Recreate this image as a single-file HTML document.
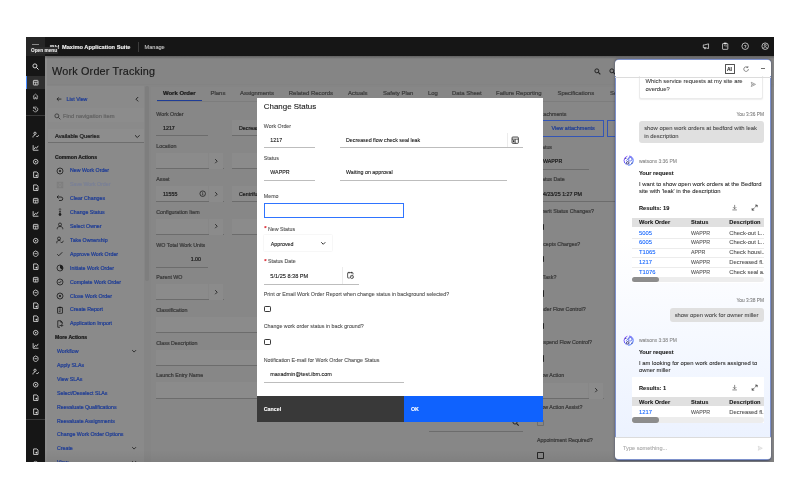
<!DOCTYPE html>
<html lang="en">
<head>
<meta charset="utf-8">
<title>Work Order Tracking - Change Status</title>
<style>
html,body{margin:0;padding:0;background:#ffffff;}
body{width:800px;height:500px;position:relative;overflow:hidden;font-family:"Liberation Sans",sans-serif;}
#app{position:absolute;left:0;top:0;width:800px;height:500px;overflow:hidden;}
#clip{position:absolute;left:0;top:0;width:774px;height:462px;overflow:hidden;will-change:transform;}
.b{position:absolute;}
.t{position:absolute;white-space:nowrap;}
</style>
</head>
<body>
<div id="app"><div id="clip">
<!-- application under overlay -->
<div class="b" style="left:26px;top:37px;width:748px;height:425px;background:#858585;"></div>
<div class="b" style="left:26px;top:37px;width:748px;height:19px;background:#161616;"></div>
<div class="b" style="left:26px;top:56px;width:19px;height:406px;background:#161616;"></div>
<div class="b" style="left:26px;top:37px;width:19px;height:19px;background:#262626;"></div>
<div class="b" style="left:31.8px;top:44.4px;width:7px;height:1.1px;background:#8a8a8a;"></div>
<div class="t" style="top:43.61px;font-size:5.65px;line-height:6.78px;color:#f4f4f4;left:49.5px;-webkit-text-stroke:0.1px currentColor;">IBM</div>
<div class="t" style="top:43.61px;font-size:5.65px;line-height:6.78px;color:#f4f4f4;left:62px;font-weight:700;-webkit-text-stroke:0.1px currentColor;">Maximo Application Suite</div>
<div class="b" style="left:137.6px;top:41.5px;width:0.6px;height:10px;background:#3c3c3c;"></div>
<div class="t" style="top:43.64px;font-size:5.6px;line-height:6.72px;color:#c6c6c6;left:144.5px;-webkit-text-stroke:0.1px currentColor;">Manage</div>
<div class="b" style="left:29.5px;top:47px;width:28.5px;height:6.6px;background:#2c2c2c;border-radius:0.8px;"></div>
<div class="t" style="top:47.95px;font-size:4.75px;line-height:5.7px;color:#e6e6e6;left:31px;font-weight:700;-webkit-text-stroke:0.1px currentColor;">Open menu</div>
<svg class="b" style="left:701.6px;top:42.3px;" width="8.4" height="8.4" viewBox="0 0 32 32"><path d="M5 11h5l15-4v18l-15-4H5z M9 21v5h4v-4" fill="none" stroke="#ececec" stroke-width="2.8" stroke-linejoin="round"/></svg>
<svg class="b" style="left:721px;top:42.4px;" width="8.4" height="8.4" viewBox="0 0 32 32"><rect x="6" y="6" width="20" height="22" rx="1.5" fill="none" stroke="#ececec" stroke-width="2.8"/><rect x="11" y="2.5" width="10" height="6" fill="#ececec"/><path d="M17 13h5M17 18h5M11 13l2 2 3-4" stroke="#ececec" stroke-width="2" fill="none"/></svg>
<svg class="b" style="left:740.8px;top:42.4px;" width="8.4" height="8.4" viewBox="0 0 32 32"><circle cx="16" cy="16" r="12.5" fill="none" stroke="#ececec" stroke-width="2.8"/><text x="16" y="21.5" font-size="16" font-weight="700" text-anchor="middle" fill="#ececec" font-family="Liberation Sans, sans-serif">?</text></svg>
<svg class="b" style="left:760.6px;top:42.4px;" width="8.4" height="8.4" viewBox="0 0 32 32"><circle cx="16" cy="16" r="12.5" fill="none" stroke="#ececec" stroke-width="2.8"/><circle cx="16" cy="12.5" r="4" fill="none" stroke="#ececec" stroke-width="2.4"/><path d="M8.5 25c1-4.5 4-6 7.5-6s6.5 1.5 7.5 6" fill="none" stroke="#ececec" stroke-width="2.4"/></svg>
<div class="b" style="left:26px;top:75.6px;width:19px;height:13.6px;background:#2e2e2e;"></div>
<div class="b" style="left:26px;top:75.6px;width:1.4px;height:13.6px;background:#4589ff;"></div>
<svg class="b" style="left:32px;top:63.3px;" width="7.2" height="7.2" viewBox="0 0 32 32"><circle cx="13" cy="13" r="9" fill="none" stroke="#f0f0f0" stroke-width="3.8"/><path d="M20 20l9 9" stroke="#f0f0f0" stroke-width="4.2"/></svg>
<svg class="b" style="left:31.8px;top:79.3px;" width="7.4" height="7.4" viewBox="0 0 32 32"><rect x="6" y="6" width="20" height="20" rx="2" fill="none" stroke="#dcdcdc" stroke-width="3.7"/><path d="M6 14h20M16 14v12" stroke="#dcdcdc" stroke-width="3.2"/></svg>
<svg class="b" style="left:32px;top:92.7px;" width="7" height="7" viewBox="0 0 32 32"><path d="M4 16L16 5l12 11M8 14v13h6v-7h4v7h6V14" fill="none" stroke="#dcdcdc" stroke-width="3"/></svg>
<svg class="b" style="left:32px;top:105.7px;" width="7" height="7" viewBox="0 0 32 32"><path d="M7 9a11 11 0 1 1-2 9M7 3v7h7M16 10v7l5 3" fill="none" stroke="#dcdcdc" stroke-width="3"/></svg>
<div class="b" style="left:26px;top:115.4px;width:19px;height:0.6px;background:#3a3a3a;"></div>
<svg class="b" style="left:31.8px;top:131.3px;" width="7.4" height="7.4" viewBox="0 0 32 32"><circle cx="13" cy="10" r="5" fill="none" stroke="#dcdcdc" stroke-width="3.7"/><path d="M4 28c0-7 4-10 9-10M19 22l4 4 6-8" fill="none" stroke="#dcdcdc" stroke-width="3.7"/></svg>
<svg class="b" style="left:31.8px;top:144.455px;" width="7.4" height="7.4" viewBox="0 0 32 32"><path d="M5 27h23M5 27V5M9 22l6-8 5 4 7-10" fill="none" stroke="#dcdcdc" stroke-width="3.7"/></svg>
<svg class="b" style="left:31.8px;top:157.61px;" width="7.4" height="7.4" viewBox="0 0 32 32"><circle cx="16" cy="16" r="10" fill="none" stroke="#dcdcdc" stroke-width="3.7"/><circle cx="16" cy="16" r="3.5" fill="#dcdcdc"/></svg>
<svg class="b" style="left:31.8px;top:170.76500000000001px;" width="7.4" height="7.4" viewBox="0 0 32 32"><path d="M7 4h14l5 5v19H7z" fill="none" stroke="#dcdcdc" stroke-width="3.7"/><circle cx="19" cy="20" r="4" fill="#dcdcdc"/></svg>
<svg class="b" style="left:31.8px;top:183.92000000000002px;" width="7.4" height="7.4" viewBox="0 0 32 32"><path d="M7 4h14l5 5v19H7z" fill="none" stroke="#dcdcdc" stroke-width="3.7"/><circle cx="19" cy="20" r="4" fill="#dcdcdc"/></svg>
<svg class="b" style="left:31.8px;top:197.075px;" width="7.4" height="7.4" viewBox="0 0 32 32"><rect x="6" y="6" width="20" height="20" rx="2" fill="none" stroke="#dcdcdc" stroke-width="3.7"/><path d="M6 14h20M16 14v12" stroke="#dcdcdc" stroke-width="3.2"/></svg>
<svg class="b" style="left:31.8px;top:210.23000000000002px;" width="7.4" height="7.4" viewBox="0 0 32 32"><path d="M5 27h23M5 27V5M9 22l6-8 5 4 7-10" fill="none" stroke="#dcdcdc" stroke-width="3.7"/></svg>
<svg class="b" style="left:31.8px;top:223.385px;" width="7.4" height="7.4" viewBox="0 0 32 32"><rect x="6" y="6" width="20" height="20" rx="2" fill="none" stroke="#dcdcdc" stroke-width="3.7"/><path d="M6 14h20M16 14v12" stroke="#dcdcdc" stroke-width="3.2"/></svg>
<svg class="b" style="left:31.8px;top:236.54000000000002px;" width="7.4" height="7.4" viewBox="0 0 32 32"><circle cx="16" cy="16" r="10" fill="none" stroke="#dcdcdc" stroke-width="3.7"/><circle cx="16" cy="16" r="3.5" fill="#dcdcdc"/></svg>
<svg class="b" style="left:31.8px;top:249.695px;" width="7.4" height="7.4" viewBox="0 0 32 32"><path d="M16 4l10 6v10c0 4-5 7-10 9-5-2-10-5-10-9V10z" fill="none" stroke="#dcdcdc" stroke-width="3.7"/><path d="M11 16h10" stroke="#dcdcdc" stroke-width="3.7"/></svg>
<svg class="b" style="left:31.8px;top:262.84999999999997px;" width="7.4" height="7.4" viewBox="0 0 32 32"><path d="M7 4h14l5 5v19H7z" fill="none" stroke="#dcdcdc" stroke-width="3.7"/><circle cx="19" cy="20" r="4" fill="#dcdcdc"/></svg>
<svg class="b" style="left:31.8px;top:276.005px;" width="7.4" height="7.4" viewBox="0 0 32 32"><rect x="6" y="6" width="20" height="20" rx="2" fill="none" stroke="#dcdcdc" stroke-width="3.7"/><path d="M6 14h20M16 14v12" stroke="#dcdcdc" stroke-width="3.2"/></svg>
<svg class="b" style="left:31.8px;top:289.16px;" width="7.4" height="7.4" viewBox="0 0 32 32"><path d="M16 4l10 6v10c0 4-5 7-10 9-5-2-10-5-10-9V10z" fill="none" stroke="#dcdcdc" stroke-width="3.7"/><path d="M11 16h10" stroke="#dcdcdc" stroke-width="3.7"/></svg>
<svg class="b" style="left:31.8px;top:302.315px;" width="7.4" height="7.4" viewBox="0 0 32 32"><path d="M7 4h14l5 5v19H7z" fill="none" stroke="#dcdcdc" stroke-width="3.7"/><circle cx="19" cy="20" r="4" fill="#dcdcdc"/></svg>
<svg class="b" style="left:31.8px;top:315.46999999999997px;" width="7.4" height="7.4" viewBox="0 0 32 32"><path d="M7 4h14l5 5v19H7z" fill="none" stroke="#dcdcdc" stroke-width="3.7"/><circle cx="19" cy="20" r="4" fill="#dcdcdc"/></svg>
<svg class="b" style="left:31.8px;top:328.625px;" width="7.4" height="7.4" viewBox="0 0 32 32"><circle cx="16" cy="16" r="10" fill="none" stroke="#dcdcdc" stroke-width="3.7"/><circle cx="16" cy="16" r="3.5" fill="#dcdcdc"/></svg>
<svg class="b" style="left:31.8px;top:341.78000000000003px;" width="7.4" height="7.4" viewBox="0 0 32 32"><path d="M5 27h23M5 27V5M9 22l6-8 5 4 7-10" fill="none" stroke="#dcdcdc" stroke-width="3.7"/></svg>
<svg class="b" style="left:31.8px;top:354.935px;" width="7.4" height="7.4" viewBox="0 0 32 32"><path d="M16 4l10 6v10c0 4-5 7-10 9-5-2-10-5-10-9V10z" fill="none" stroke="#dcdcdc" stroke-width="3.7"/><path d="M11 16h10" stroke="#dcdcdc" stroke-width="3.7"/></svg>
<svg class="b" style="left:31.8px;top:368.09px;" width="7.4" height="7.4" viewBox="0 0 32 32"><circle cx="13" cy="10" r="5" fill="none" stroke="#dcdcdc" stroke-width="3.7"/><path d="M4 28c0-7 4-10 9-10M19 22l4 4 6-8" fill="none" stroke="#dcdcdc" stroke-width="3.7"/></svg>
<svg class="b" style="left:31.8px;top:381.245px;" width="7.4" height="7.4" viewBox="0 0 32 32"><circle cx="16" cy="16" r="10" fill="none" stroke="#dcdcdc" stroke-width="3.7"/><circle cx="16" cy="16" r="3.5" fill="#dcdcdc"/></svg>
<svg class="b" style="left:31.8px;top:394.4px;" width="7.4" height="7.4" viewBox="0 0 32 32"><path d="M7 4h14l5 5v19H7z" fill="none" stroke="#dcdcdc" stroke-width="3.7"/><circle cx="19" cy="20" r="4" fill="#dcdcdc"/></svg>
<svg class="b" style="left:31.8px;top:407.555px;" width="7.4" height="7.4" viewBox="0 0 32 32"><path d="M7 4h14l5 5v19H7z" fill="none" stroke="#dcdcdc" stroke-width="3.7"/><circle cx="19" cy="20" r="4" fill="#dcdcdc"/></svg>
<div class="b" style="left:26px;top:418.5px;width:19px;height:0.6px;background:#3a3a3a;"></div>
<svg class="b" style="left:31.8px;top:447.6px;" width="7.4" height="7.4" viewBox="0 0 32 32"><path d="M7 4h14l5 5v19H7z" fill="none" stroke="#dcdcdc" stroke-width="3.7"/><circle cx="19" cy="20" r="4" fill="#dcdcdc"/></svg>
<svg class="b" style="left:32px;top:459.5px;" width="7" height="7" viewBox="0 0 32 32"><circle cx="16" cy="16" r="10" fill="none" stroke="#dcdcdc" stroke-width="3"/></svg>
<div class="b" style="left:45px;top:56px;width:1.6px;height:406px;background:#8e8e8e;"></div>
<div class="t" style="top:64.62px;font-size:10.8px;line-height:12.96px;color:#1a1a1a;left:52px;letter-spacing:0.2px;-webkit-text-stroke:0.16px currentColor;">Work Order Tracking</div>
<div class="b" style="left:47px;top:84.3px;width:727px;height:0.6px;background:#838383;"></div>
<div class="b" style="left:45px;top:56px;width:729px;height:2.5px;background:linear-gradient(180deg,rgba(0,0,0,0.28),rgba(0,0,0,0));"></div>
<div class="b" style="left:46.6px;top:86px;width:97.2px;height:376px;background:#8a8a8a;"></div>
<div class="b" style="left:150.5px;top:87px;width:624px;height:375px;background:#878787;"></div>
<div class="b" style="left:144.5px;top:86px;width:4.6px;height:195px;background:#7e7e7e;border-radius:2.3px;"></div>
<svg class="b" style="left:55.6px;top:96.1px;" width="6.2" height="6.2" viewBox="0 0 32 32"><path d="M28 16H6M14 7l-9 9 9 9" fill="none" stroke="#1c1c1c" stroke-width="4"/></svg>
<div class="t" style="top:96.05px;font-size:5.25px;line-height:6.3px;color:#1f3d96;left:66.5px;-webkit-text-stroke:0.22px currentColor;">List View</div>
<svg class="b" style="left:133.8px;top:95.8px;" width="6.4" height="6.4" viewBox="0 0 32 32"><path d="M21 5L10 16l11 11" fill="none" stroke="#1c1c1c" stroke-width="4.4"/></svg>
<div class="b" style="left:48px;top:108.3px;width:95.5px;height:14px;background:#8c8c8c;"></div>
<svg class="b" style="left:53.6px;top:112.6px;" width="7" height="7" viewBox="0 0 32 32"><circle cx="13" cy="13" r="9" fill="none" stroke="#3a3a3a" stroke-width="4"/><path d="M20 20l9 9" stroke="#3a3a3a" stroke-width="4.4"/></svg>
<div class="t" style="top:112.75px;font-size:5.75px;line-height:6.9px;color:#646464;left:63px;-webkit-text-stroke:0.22px currentColor;">Find navigation item</div>
<div class="b" style="left:48px;top:129px;width:95.5px;height:13px;background:#8d8d8d;"></div>
<div class="b" style="left:48px;top:141.6px;width:95.5px;height:0.7px;background:#6e6e6e;"></div>
<div class="t" style="top:133.29px;font-size:5.69px;line-height:6.83px;color:#1c1c1c;left:55px;-webkit-text-stroke:0.22px currentColor;">Available Queries</div>
<svg class="b" style="left:134px;top:133.3px;" width="6.6" height="6.6" viewBox="0 0 32 32"><path d="M5 11l11 11 11-11" fill="none" stroke="#1c1c1c" stroke-width="4.4"/></svg>
<div class="t" style="top:153.84px;font-size:5.1px;line-height:6.12px;color:#1a1a1a;left:55px;font-weight:700;-webkit-text-stroke:0.22px currentColor;">Common Actions</div>
<svg class="b" style="left:55.5px;top:166.6px;" width="8" height="8" viewBox="0 0 32 32"><circle cx="16" cy="16" r="12" fill="none" stroke="#1c1c1c" stroke-width="3.2"/><circle cx="16" cy="16" r="4" fill="#1c1c1c"/></svg>
<div class="t" style="top:167.45px;font-size:5.25px;line-height:6.3px;color:#1f3d96;left:70px;-webkit-text-stroke:0.22px currentColor;">New Work Order</div>
<svg class="b" style="left:55.5px;top:180.5px;" width="8" height="8" viewBox="0 0 32 32"><rect x="5" y="5" width="22" height="22" fill="none" stroke="#7c7c7c" stroke-width="3.2"/><path d="M10 5v8h12V5M10 27v-8h12v8" fill="none" stroke="#7c7c7c" stroke-width="2.8"/></svg>
<div class="t" style="top:181.35px;font-size:5.25px;line-height:6.3px;color:#7a8096;left:70px;-webkit-text-stroke:0.22px currentColor;">Save Work Order</div>
<svg class="b" style="left:55.5px;top:194.4px;" width="8" height="8" viewBox="0 0 32 32"><path d="M10 6l-6 6 6 6M4 12h16a7 7 0 0 1 0 14h-8" fill="none" stroke="#1c1c1c" stroke-width="3.4"/></svg>
<div class="t" style="top:195.25px;font-size:5.25px;line-height:6.3px;color:#1f3d96;left:70px;-webkit-text-stroke:0.22px currentColor;">Clear Changes</div>
<svg class="b" style="left:55.5px;top:208.3px;" width="8" height="8" viewBox="0 0 32 32"><circle cx="16" cy="5.5" r="3.6" fill="#6a6a6a" stroke="#3a3a3a" stroke-width="1.6"/><circle cx="16" cy="15" r="4.2" fill="#3a3a3a"/><circle cx="16" cy="25" r="5" fill="#1c1c1c"/><path d="M11 28l5 4 5-4z" fill="#1c1c1c"/></svg>
<div class="t" style="top:209.15px;font-size:5.25px;line-height:6.3px;color:#1f3d96;left:70px;-webkit-text-stroke:0.22px currentColor;">Change Status</div>
<svg class="b" style="left:55.5px;top:222.2px;" width="8" height="8" viewBox="0 0 32 32"><circle cx="16" cy="10" r="6" fill="none" stroke="#1c1c1c" stroke-width="3.2"/><path d="M5 29v-3c0-5 4-8 11-8s11 3 11 8v3" fill="none" stroke="#1c1c1c" stroke-width="3.2"/></svg>
<div class="t" style="top:223.05px;font-size:5.25px;line-height:6.3px;color:#1f3d96;left:70px;-webkit-text-stroke:0.22px currentColor;">Select Owner</div>
<svg class="b" style="left:55.5px;top:236.1px;" width="8" height="8" viewBox="0 0 32 32"><circle cx="12" cy="10" r="6" fill="none" stroke="#1c1c1c" stroke-width="3.2"/><path d="M3 29v-3c0-5 3-8 9-8 3 0 5 .6 6.5 2M19 24l4 4 7-9" fill="none" stroke="#1c1c1c" stroke-width="3.2"/></svg>
<div class="t" style="top:236.95px;font-size:5.25px;line-height:6.3px;color:#1f3d96;left:70px;-webkit-text-stroke:0.22px currentColor;">Take Ownership</div>
<svg class="b" style="left:55.5px;top:250px;" width="8" height="8" viewBox="0 0 32 32"><path d="M5 17l6 6L25 9" fill="none" stroke="#1c1c1c" stroke-width="3.6"/></svg>
<div class="t" style="top:250.85px;font-size:5.25px;line-height:6.3px;color:#1f3d96;left:70px;-webkit-text-stroke:0.22px currentColor;">Approve Work Order</div>
<svg class="b" style="left:55.5px;top:263.9px;" width="8" height="8" viewBox="0 0 32 32"><circle cx="16" cy="16" r="12" fill="none" stroke="#1c1c1c" stroke-width="3.2"/><path d="M16 4a12 12 0 0 1 9 20L16 16z" fill="#1c1c1c"/></svg>
<div class="t" style="top:264.75px;font-size:5.25px;line-height:6.3px;color:#1f3d96;left:70px;-webkit-text-stroke:0.22px currentColor;">Initiate Work Order</div>
<svg class="b" style="left:55.5px;top:277.8px;" width="8" height="8" viewBox="0 0 32 32"><circle cx="16" cy="16" r="12" fill="none" stroke="#1c1c1c" stroke-width="3.2"/><path d="M10 16l4 4 8-9" fill="none" stroke="#1c1c1c" stroke-width="3.2"/></svg>
<div class="t" style="top:278.65px;font-size:5.25px;line-height:6.3px;color:#1f3d96;left:70px;-webkit-text-stroke:0.22px currentColor;">Complete Work Order</div>
<svg class="b" style="left:55.5px;top:291.7px;" width="8" height="8" viewBox="0 0 32 32"><circle cx="16" cy="16" r="12" fill="none" stroke="#1c1c1c" stroke-width="3.2"/><path d="M11 11l10 10M21 11L11 21" fill="none" stroke="#1c1c1c" stroke-width="3.2"/></svg>
<div class="t" style="top:292.55px;font-size:5.25px;line-height:6.3px;color:#1f3d96;left:70px;-webkit-text-stroke:0.22px currentColor;">Close Work Order</div>
<svg class="b" style="left:55.5px;top:305.6px;" width="8" height="8" viewBox="0 0 32 32"><rect x="6" y="6" width="20" height="23" rx="1.5" fill="none" stroke="#1c1c1c" stroke-width="3.2"/><rect x="11" y="3" width="10" height="6" fill="#1c1c1c"/><path d="M11 16h10M11 22h7" stroke="#1c1c1c" stroke-width="2.8"/></svg>
<div class="t" style="top:306.45px;font-size:5.25px;line-height:6.3px;color:#1f3d96;left:70px;-webkit-text-stroke:0.22px currentColor;">Create Report</div>
<svg class="b" style="left:55.5px;top:319.5px;" width="8" height="8" viewBox="0 0 32 32"><path d="M7 3h12l6 6v8M7 3v26h9M19 3v6h6" fill="none" stroke="#1c1c1c" stroke-width="3.2"/><path d="M14 22h12M22 17l5 5-5 5" fill="none" stroke="#1c1c1c" stroke-width="3.2"/></svg>
<div class="t" style="top:320.35px;font-size:5.25px;line-height:6.3px;color:#1f3d96;left:70px;-webkit-text-stroke:0.22px currentColor;">Application Import</div>
<div class="t" style="top:334.34px;font-size:5.1px;line-height:6.12px;color:#1a1a1a;left:55px;font-weight:700;-webkit-text-stroke:0.22px currentColor;">More Actions</div>
<div class="t" style="top:348.05px;font-size:5.25px;line-height:6.3px;color:#1f3d96;left:57px;-webkit-text-stroke:0.22px currentColor;">Workflow</div>
<svg class="b" style="left:130.5px;top:348px;" width="6.2" height="6.2" viewBox="0 0 32 32"><path d="M6 11l10 10 10-10" fill="none" stroke="#1c1c1c" stroke-width="4.2"/></svg>
<div class="t" style="top:361.95px;font-size:5.25px;line-height:6.3px;color:#1f3d96;left:57px;-webkit-text-stroke:0.22px currentColor;">Apply SLAs</div>
<div class="t" style="top:375.85px;font-size:5.25px;line-height:6.3px;color:#1f3d96;left:57px;-webkit-text-stroke:0.22px currentColor;">View SLAs</div>
<div class="t" style="top:389.75px;font-size:5.25px;line-height:6.3px;color:#1f3d96;left:57px;-webkit-text-stroke:0.22px currentColor;">Select/Deselect SLAs</div>
<div class="t" style="top:403.65px;font-size:5.25px;line-height:6.3px;color:#1f3d96;left:57px;-webkit-text-stroke:0.22px currentColor;">Reevaluate Qualifications</div>
<div class="t" style="top:417.55px;font-size:5.25px;line-height:6.3px;color:#1f3d96;left:57px;-webkit-text-stroke:0.22px currentColor;">Reevaluate Assignments</div>
<div class="t" style="top:431.45px;font-size:5.25px;line-height:6.3px;color:#1f3d96;left:57px;-webkit-text-stroke:0.22px currentColor;">Change Work Order Options</div>
<div class="t" style="top:445.35px;font-size:5.25px;line-height:6.3px;color:#1f3d96;left:57px;-webkit-text-stroke:0.22px currentColor;">Create</div>
<svg class="b" style="left:130.5px;top:445.3px;" width="6.2" height="6.2" viewBox="0 0 32 32"><path d="M6 11l10 10 10-10" fill="none" stroke="#1c1c1c" stroke-width="4.2"/></svg>
<div class="t" style="top:459.25px;font-size:5.25px;line-height:6.3px;color:#1f3d96;left:57px;-webkit-text-stroke:0.22px currentColor;">View</div>
<svg class="b" style="left:130.5px;top:459.2px;" width="6.2" height="6.2" viewBox="0 0 32 32"><path d="M6 11l10 10 10-10" fill="none" stroke="#1c1c1c" stroke-width="4.2"/></svg>
<div class="t" style="top:90.33px;font-size:5.95px;line-height:7.14px;color:#1a1a1a;left:163px;font-weight:700;-webkit-text-stroke:0.22px currentColor;">Work Order</div>
<div class="t" style="top:90.33px;font-size:5.95px;line-height:7.14px;color:#3c3c3c;left:210.5px;-webkit-text-stroke:0.22px currentColor;">Plans</div>
<div class="t" style="top:90.33px;font-size:5.95px;line-height:7.14px;color:#3c3c3c;left:240px;-webkit-text-stroke:0.22px currentColor;">Assignments</div>
<div class="t" style="top:90.33px;font-size:5.95px;line-height:7.14px;color:#3c3c3c;left:288.8px;-webkit-text-stroke:0.22px currentColor;">Related Records</div>
<div class="t" style="top:90.33px;font-size:5.95px;line-height:7.14px;color:#3c3c3c;left:348px;-webkit-text-stroke:0.22px currentColor;">Actuals</div>
<div class="t" style="top:90.33px;font-size:5.95px;line-height:7.14px;color:#3c3c3c;left:383px;-webkit-text-stroke:0.22px currentColor;">Safety Plan</div>
<div class="t" style="top:90.33px;font-size:5.95px;line-height:7.14px;color:#3c3c3c;left:428px;-webkit-text-stroke:0.22px currentColor;">Log</div>
<div class="t" style="top:90.33px;font-size:5.95px;line-height:7.14px;color:#3c3c3c;left:452px;-webkit-text-stroke:0.22px currentColor;">Data Sheet</div>
<div class="t" style="top:90.33px;font-size:5.95px;line-height:7.14px;color:#3c3c3c;left:496px;-webkit-text-stroke:0.22px currentColor;">Failure Reporting</div>
<div class="t" style="top:90.33px;font-size:5.95px;line-height:7.14px;color:#3c3c3c;left:557.5px;-webkit-text-stroke:0.22px currentColor;">Specifications</div>
<div class="t" style="top:90.33px;font-size:5.95px;line-height:7.14px;color:#3c3c3c;left:610px;-webkit-text-stroke:0.22px currentColor;">Se</div>
<div class="b" style="left:157px;top:101px;width:458px;height:0.5px;background:#7d7d7d;"></div>
<div class="b" style="left:157px;top:100.3px;width:45px;height:1.1px;background:#1f3d96;"></div>
<div class="t" style="top:110.82px;font-size:5.3px;line-height:6.36px;color:#3a3a3a;left:156.3px;-webkit-text-stroke:0.22px currentColor;">Work Order</div>
<div class="b" style="left:156px;top:135.4px;width:52px;height:0.7px;background:#6c6c6c;"></div>
<div class="t" style="top:124.82px;font-size:5.3px;line-height:6.36px;color:#1c1c1c;left:163px;-webkit-text-stroke:0.22px currentColor;">1217</div>
<div class="b" style="left:232px;top:120px;width:60px;height:16px;background:#8b8b8b;"></div>
<div class="b" style="left:232px;top:135.4px;width:60px;height:0.7px;background:#6c6c6c;"></div>
<div class="t" style="top:124.82px;font-size:5.3px;line-height:6.36px;color:#1c1c1c;left:239px;-webkit-text-stroke:0.22px currentColor;">Decreased flow check seal leak</div>
<div class="t" style="top:143.42px;font-size:5.3px;line-height:6.36px;color:#3a3a3a;left:156.3px;-webkit-text-stroke:0.22px currentColor;">Location</div>
<div class="b" style="left:156px;top:153px;width:52px;height:16px;background:#8b8b8b;"></div>
<div class="b" style="left:156px;top:168.4px;width:67.5px;height:0.7px;background:#6c6c6c;"></div>
<div class="b" style="left:208.8px;top:153px;width:14.7px;height:16px;background:#8b8b8b;"></div>
<svg class="b" style="left:212.8px;top:157.8px;" width="6.4" height="6.4" viewBox="0 0 32 32"><path d="M11 6l10 10-10 10" fill="none" stroke="#1c1c1c" stroke-width="4.2"/></svg>
<div class="b" style="left:232px;top:153px;width:60px;height:16px;background:#8b8b8b;"></div>
<div class="b" style="left:232px;top:168.4px;width:60px;height:0.7px;background:#6c6c6c;"></div>
<div class="t" style="top:176.02px;font-size:5.3px;line-height:6.36px;color:#3a3a3a;left:156.3px;-webkit-text-stroke:0.22px currentColor;">Asset</div>
<div class="b" style="left:156px;top:186px;width:52px;height:16px;background:#8b8b8b;"></div>
<div class="b" style="left:156px;top:201.4px;width:67.5px;height:0.7px;background:#6c6c6c;"></div>
<div class="t" style="top:190.82px;font-size:5.3px;line-height:6.36px;color:#1c1c1c;left:163px;-webkit-text-stroke:0.22px currentColor;">11555</div>
<div class="b" style="left:208.8px;top:186px;width:14.7px;height:16px;background:#8b8b8b;"></div>
<svg class="b" style="left:212.8px;top:190.8px;" width="6.4" height="6.4" viewBox="0 0 32 32"><path d="M11 6l10 10-10 10" fill="none" stroke="#1c1c1c" stroke-width="4.2"/></svg>
<div class="b" style="left:232px;top:186px;width:60px;height:16px;background:#8b8b8b;"></div>
<div class="b" style="left:232px;top:201.4px;width:60px;height:0.7px;background:#6c6c6c;"></div>
<div class="t" style="top:190.82px;font-size:5.3px;line-height:6.36px;color:#1c1c1c;left:239px;-webkit-text-stroke:0.22px currentColor;">Centrifugal Pump</div>
<svg class="b" style="left:198.8px;top:190.3px;" width="7.4" height="7.4" viewBox="0 0 32 32"><circle cx="16" cy="16" r="12" fill="none" stroke="#1c1c1c" stroke-width="3.2"/><path d="M16 14v9" stroke="#1c1c1c" stroke-width="3.2"/><circle cx="16" cy="9.5" r="2" fill="#1c1c1c"/></svg>
<div class="t" style="top:208.82px;font-size:5.3px;line-height:6.36px;color:#3a3a3a;left:156.3px;-webkit-text-stroke:0.22px currentColor;">Configuration Item</div>
<div class="b" style="left:156px;top:218.5px;width:52px;height:16px;background:#8b8b8b;"></div>
<div class="b" style="left:156px;top:233.9px;width:67.5px;height:0.7px;background:#6c6c6c;"></div>
<div class="b" style="left:208.8px;top:218.5px;width:14.7px;height:16px;background:#8b8b8b;"></div>
<svg class="b" style="left:212.8px;top:223.3px;" width="6.4" height="6.4" viewBox="0 0 32 32"><path d="M11 6l10 10-10 10" fill="none" stroke="#1c1c1c" stroke-width="4.2"/></svg>
<div class="b" style="left:232px;top:218.5px;width:60px;height:16px;background:#8b8b8b;"></div>
<div class="b" style="left:232px;top:233.9px;width:60px;height:0.7px;background:#6c6c6c;"></div>
<div class="t" style="top:241.62px;font-size:5.3px;line-height:6.36px;color:#3a3a3a;left:156.3px;-webkit-text-stroke:0.22px currentColor;">WO Total Work Units</div>
<div class="b" style="left:156px;top:266.59999999999997px;width:52px;height:0.7px;background:#6c6c6c;"></div>
<div class="t" style="top:256.02px;font-size:5.3px;line-height:6.36px;color:#1c1c1c;right:573px;-webkit-text-stroke:0.22px currentColor;">1.00</div>
<div class="t" style="top:274.32px;font-size:5.3px;line-height:6.36px;color:#3a3a3a;left:156.3px;-webkit-text-stroke:0.22px currentColor;">Parent WO</div>
<div class="b" style="left:156px;top:284px;width:52px;height:16px;background:#8b8b8b;"></div>
<div class="b" style="left:156px;top:299.4px;width:67.5px;height:0.7px;background:#6c6c6c;"></div>
<div class="b" style="left:208.8px;top:284px;width:14.7px;height:16px;background:#8b8b8b;"></div>
<svg class="b" style="left:212.8px;top:288.8px;" width="6.4" height="6.4" viewBox="0 0 32 32"><path d="M11 6l10 10-10 10" fill="none" stroke="#1c1c1c" stroke-width="4.2"/></svg>
<div class="t" style="top:307.02px;font-size:5.3px;line-height:6.36px;color:#3a3a3a;left:156.3px;-webkit-text-stroke:0.22px currentColor;">Classification</div>
<div class="b" style="left:156px;top:316.8px;width:120px;height:16px;background:#8b8b8b;"></div>
<div class="b" style="left:156px;top:332.2px;width:120px;height:0.7px;background:#6c6c6c;"></div>
<div class="t" style="top:339.82px;font-size:5.3px;line-height:6.36px;color:#3a3a3a;left:156.3px;-webkit-text-stroke:0.22px currentColor;">Class Description</div>
<div class="b" style="left:156px;top:349.5px;width:120px;height:16px;background:#8b8b8b;"></div>
<div class="b" style="left:156px;top:364.9px;width:120px;height:0.7px;background:#6c6c6c;"></div>
<div class="t" style="top:372.42px;font-size:5.3px;line-height:6.36px;color:#3a3a3a;left:156.3px;-webkit-text-stroke:0.22px currentColor;">Launch Entry Name</div>
<div class="b" style="left:156px;top:382.2px;width:120px;height:16px;background:#8b8b8b;"></div>
<div class="b" style="left:156px;top:397.59999999999997px;width:120px;height:0.7px;background:#6c6c6c;"></div>
<div class="b" style="left:429px;top:430.6px;width:94px;height:0.7px;background:#6c6c6c;"></div>
<svg class="b" style="left:512.3px;top:419.3px;" width="7.4" height="7.4" viewBox="0 0 32 32"><circle cx="13" cy="13" r="9" fill="none" stroke="#1c1c1c" stroke-width="4"/><path d="M20 20l9 9" stroke="#1c1c1c" stroke-width="4.4"/></svg>
<svg class="b" style="left:594px;top:67.6px;" width="7" height="7" viewBox="0 0 32 32"><circle cx="13" cy="13" r="9" fill="none" stroke="#1e1e1e" stroke-width="4.4"/><path d="M20 20l9 9" stroke="#1e1e1e" stroke-width="4.8"/></svg>
<svg class="b" style="left:609px;top:67.6px;" width="7" height="7" viewBox="0 0 32 32"><circle cx="13" cy="13" r="9" fill="none" stroke="#1e1e1e" stroke-width="4.4"/><path d="M20 20l9 9" stroke="#1e1e1e" stroke-width="4.8"/></svg>
<div class="t" style="top:110.82px;font-size:5.3px;line-height:6.36px;color:#3a3a3a;left:537px;-webkit-text-stroke:0.22px currentColor;">Attachments</div>
<div class="b" style="left:537px;top:120px;width:66.5px;height:17px;border:0.6px solid #3355b5;box-sizing:border-box;"></div>
<div class="t" style="top:125px;font-size:5.5px;line-height:6.6px;color:#1f3d96;left:551.5px;-webkit-text-stroke:0.22px currentColor;">View attachments</div>
<div class="b" style="left:607px;top:120px;width:12px;height:17px;border:0.6px solid #3355b5;box-sizing:border-box;"></div>
<div class="t" style="top:143.62px;font-size:5.3px;line-height:6.36px;color:#3a3a3a;left:537px;-webkit-text-stroke:0.22px currentColor;">Status</div>
<div class="t" style="top:157.82px;font-size:5.3px;line-height:6.36px;color:#1c1c1c;left:543px;-webkit-text-stroke:0.22px currentColor;">WAPPR</div>
<div class="b" style="left:537px;top:168.7px;width:52px;height:0.7px;background:#6c6c6c;"></div>
<div class="t" style="top:176.32px;font-size:5.3px;line-height:6.36px;color:#3a3a3a;left:537px;-webkit-text-stroke:0.22px currentColor;">Status Date</div>
<div class="t" style="top:190.62px;font-size:5.3px;line-height:6.36px;color:#1c1c1c;left:543px;-webkit-text-stroke:0.22px currentColor;">4/23/25 1:27 PM</div>
<div class="b" style="left:537px;top:201.2px;width:84px;height:0.9px;background:#6c6c6c;"></div>
<div class="t" style="top:208.12px;font-size:5.3px;line-height:6.36px;color:#3a3a3a;left:537px;-webkit-text-stroke:0.22px currentColor;">Inherit Status Changes?</div>
<div class="b" style="left:537.4px;top:223.7px;width:6.6px;height:6.6px;border:0.8px solid #262626;border-radius:0.8px;box-sizing:border-box;"></div>
<div class="t" style="top:240.82px;font-size:5.3px;line-height:6.36px;color:#3a3a3a;left:537px;-webkit-text-stroke:0.22px currentColor;">Accepts Charges?</div>
<div class="b" style="left:537.4px;top:255.6px;width:6.6px;height:6.6px;border:0.8px solid #262626;border-radius:0.8px;box-sizing:border-box;"></div>
<div class="t" style="top:273.82px;font-size:5.3px;line-height:6.36px;color:#3a3a3a;left:537px;-webkit-text-stroke:0.22px currentColor;">Is Task?</div>
<div class="b" style="left:537.4px;top:290px;width:6.6px;height:6.6px;border:0.8px solid #262626;border-radius:0.8px;box-sizing:border-box;"></div>
<div class="t" style="top:306.42px;font-size:5.3px;line-height:6.36px;color:#3a3a3a;left:537px;-webkit-text-stroke:0.22px currentColor;">Under Flow Control?</div>
<div class="b" style="left:537.4px;top:322.6px;width:6.6px;height:6.6px;border:0.8px solid #262626;border-radius:0.8px;box-sizing:border-box;"></div>
<div class="t" style="top:339.02px;font-size:5.3px;line-height:6.36px;color:#3a3a3a;left:537px;-webkit-text-stroke:0.22px currentColor;">Suspend Flow Control?</div>
<div class="b" style="left:537.4px;top:355.2px;width:6.6px;height:6.6px;border:0.8px solid #262626;border-radius:0.8px;box-sizing:border-box;"></div>
<div class="t" style="top:371.82px;font-size:5.3px;line-height:6.36px;color:#3a3a3a;left:537px;-webkit-text-stroke:0.22px currentColor;">Flow Action</div>
<div class="b" style="left:537px;top:382.5px;width:51px;height:16px;background:#8b8b8b;"></div>
<div class="b" style="left:537px;top:397.9px;width:66.5px;height:0.7px;background:#6c6c6c;"></div>
<div class="b" style="left:588.8px;top:382.5px;width:14.7px;height:16px;background:#8b8b8b;"></div>
<svg class="b" style="left:592.8px;top:387.3px;" width="6.4" height="6.4" viewBox="0 0 32 32"><path d="M11 6l10 10-10 10" fill="none" stroke="#1c1c1c" stroke-width="4.2"/></svg>
<div class="t" style="top:404.42px;font-size:5.3px;line-height:6.36px;color:#3a3a3a;left:537px;-webkit-text-stroke:0.22px currentColor;">Flow Action Assist?</div>
<div class="b" style="left:537.4px;top:419.5px;width:6.6px;height:6.6px;border:0.8px solid #6e6e6e;border-radius:0.8px;box-sizing:border-box;"></div>
<div class="t" style="top:437.02px;font-size:5.3px;line-height:6.36px;color:#3a3a3a;left:537px;-webkit-text-stroke:0.22px currentColor;">Appointment Required?</div>
<div class="b" style="left:537.4px;top:452px;width:6.6px;height:6.6px;border:0.8px solid #262626;border-radius:0.8px;box-sizing:border-box;"></div>
<div class="b" style="left:45px;top:450px;width:729px;height:12px;background:linear-gradient(180deg,rgba(0,0,0,0),rgba(0,0,0,0.055));"></div>
<!-- change status modal -->
<div class="b" style="left:257px;top:97.5px;width:286px;height:324.5px;background:#ffffff;"></div>
<div class="t" style="top:101.84px;font-size:7.93px;line-height:9.52px;color:#161616;left:263.8px;-webkit-text-stroke:0.1px currentColor;">Change Status</div>
<div class="t" style="top:122.72px;font-size:5.3px;line-height:6.36px;color:#525252;left:263.8px;-webkit-text-stroke:0.1px currentColor;">Work Order</div>
<div class="t" style="top:137.02px;font-size:5.3px;line-height:6.36px;color:#161616;left:270.3px;-webkit-text-stroke:0.1px currentColor;">1217</div>
<div class="b" style="left:264px;top:147.3px;width:51px;height:0.6px;background:#bdbdbd;"></div>
<div class="t" style="top:137.02px;font-size:5.3px;line-height:6.36px;color:#161616;left:346px;-webkit-text-stroke:0.1px currentColor;">Decreased flow check seal leak</div>
<div class="b" style="left:339.5px;top:147.3px;width:183px;height:0.6px;background:#bdbdbd;"></div>
<div class="b" style="left:507.3px;top:133px;width:0.4px;height:14px;background:#ececec;"></div>
<svg class="b" style="left:510.8px;top:136px;" width="8.4" height="8.4" viewBox="0 0 32 32"><rect x="4" y="4" width="24" height="24" rx="3" fill="none" stroke="#161616" stroke-width="3"/><path d="M4 12h24M16 12v16" stroke="#161616" stroke-width="2.6"/><path d="M8 16h5v8H8z" fill="#161616"/></svg>
<div class="t" style="top:155.42px;font-size:5.3px;line-height:6.36px;color:#525252;left:263.8px;-webkit-text-stroke:0.1px currentColor;">Status</div>
<div class="t" style="top:169.42px;font-size:5.3px;line-height:6.36px;color:#161616;left:270.3px;-webkit-text-stroke:0.1px currentColor;">WAPPR</div>
<div class="b" style="left:264px;top:180.3px;width:51px;height:0.6px;background:#bdbdbd;"></div>
<div class="t" style="top:169.42px;font-size:5.3px;line-height:6.36px;color:#161616;left:346px;-webkit-text-stroke:0.1px currentColor;">Waiting on approval</div>
<div class="b" style="left:339.5px;top:180.3px;width:167.5px;height:0.6px;background:#bdbdbd;"></div>
<div class="t" style="top:193.12px;font-size:5.3px;line-height:6.36px;color:#525252;left:263.8px;-webkit-text-stroke:0.1px currentColor;">Memo</div>
<div class="b" style="left:264px;top:202.7px;width:140.3px;height:15.6px;background:#fff;border:0.9px solid #2f74ff;box-sizing:border-box;"></div>
<div class="t" style="top:224.8px;font-size:6px;line-height:7.2px;color:#da1e28;left:264.3px;font-weight:700;-webkit-text-stroke:0.1px currentColor;">*</div>
<div class="t" style="top:225.62px;font-size:5.3px;line-height:6.36px;color:#525252;left:268px;-webkit-text-stroke:0.1px currentColor;">New Status</div>
<div class="b" style="left:264px;top:235.2px;width:68px;height:16.3px;background:#fff;box-shadow:0 0 1.5px rgba(0,0,0,0.12);"></div>
<div class="t" style="top:240.82px;font-size:5.3px;line-height:6.36px;color:#161616;left:270.8px;-webkit-text-stroke:0.1px currentColor;">Approved</div>
<svg class="b" style="left:320.2px;top:240.2px;" width="6.5" height="6.5" viewBox="0 0 32 32"><path d="M6 11l10 10 10-10" fill="none" stroke="#262626" stroke-width="4.6"/></svg>
<div class="t" style="top:257.5px;font-size:6px;line-height:7.2px;color:#da1e28;left:264.3px;font-weight:700;-webkit-text-stroke:0.1px currentColor;">*</div>
<div class="t" style="top:258.32px;font-size:5.3px;line-height:6.36px;color:#525252;left:268px;-webkit-text-stroke:0.1px currentColor;">Status Date</div>
<div class="t" style="top:272.64px;font-size:5.6px;line-height:6.72px;color:#161616;left:270.3px;-webkit-text-stroke:0.1px currentColor;">5/1/25 8:38 PM</div>
<div class="b" style="left:264px;top:283.8px;width:94.5px;height:0.6px;background:#bdbdbd;"></div>
<div class="b" style="left:342.3px;top:267px;width:0.4px;height:16.5px;background:#ececec;"></div>
<svg class="b" style="left:346.3px;top:271.4px;" width="8.6" height="8.6" viewBox="0 0 32 32"><path d="M26 13V8a2 2 0 0 0-2-2H8a2 2 0 0 0-2 2v16a2 2 0 0 0 2 2h6M11 3v6M21 3v6" fill="none" stroke="#161616" stroke-width="2.6"/><circle cx="22" cy="22" r="6" fill="none" stroke="#161616" stroke-width="2.4"/><path d="M22 19v3.5l2 1.5" fill="none" stroke="#161616" stroke-width="2"/></svg>
<div class="t" style="top:290.72px;font-size:5.3px;line-height:6.36px;color:#525252;left:263.8px;-webkit-text-stroke:0.1px currentColor;">Print or Email Work Order Report when change status in background selected?</div>
<div class="b" style="left:264.4px;top:305.9px;width:6.3px;height:6.3px;border:0.85px solid #393939;border-radius:1.2px;box-sizing:border-box;"></div>
<div class="t" style="top:323.32px;font-size:5.3px;line-height:6.36px;color:#525252;left:263.8px;-webkit-text-stroke:0.1px currentColor;">Change work order status in back ground?</div>
<div class="b" style="left:264.4px;top:338.6px;width:6.3px;height:6.3px;border:0.85px solid #393939;border-radius:1.2px;box-sizing:border-box;"></div>
<div class="t" style="top:356.72px;font-size:5.3px;line-height:6.36px;color:#525252;left:263.8px;-webkit-text-stroke:0.1px currentColor;">Notification E-mail for Work Order Change Status</div>
<div class="t" style="top:371.33px;font-size:5.45px;line-height:6.54px;color:#161616;left:270.3px;-webkit-text-stroke:0.1px currentColor;">maxadmin@test.ibm.com</div>
<div class="b" style="left:264px;top:382px;width:140.3px;height:0.6px;background:#bdbdbd;"></div>
<div class="b" style="left:257px;top:395.6px;width:147.3px;height:26.4px;background:#393939;"></div>
<div class="b" style="left:404.3px;top:395.6px;width:138.7px;height:26.4px;background:#0f62fe;"></div>
<div class="t" style="top:405.82px;font-size:5.3px;line-height:6.36px;color:#ffffff;left:263.8px;font-weight:700;-webkit-text-stroke:0.1px currentColor;">Cancel</div>
<div class="t" style="top:405.82px;font-size:5.3px;line-height:6.36px;color:#ffffff;left:411px;font-weight:700;-webkit-text-stroke:0.1px currentColor;">OK</div>
<!-- assistant chat panel -->
<div class="b" style="left:614.7px;top:59.4px;width:156.8px;height:401px;background:linear-gradient(180deg,#ffffff 0%,#ffffff 45%,#eaf1ff 100%);border:0.8px solid #7d91cc;border-radius:4px;box-sizing:border-box;box-shadow:0 0 2.5px rgba(30,40,80,0.45),0 0.8px 1.2px rgba(40,55,100,0.5);overflow:hidden;"></div>
<div class="b" style="left:639.3px;top:70px;width:124px;height:28.7px;background:#fff;border:0.5px solid #ebebeb;border-radius:2px;box-sizing:border-box;box-shadow:0 0.5px 1.2px rgba(0,0,0,0.07);"></div>
<div class="t" style="top:77.99px;font-size:5.85px;line-height:7.02px;color:#3d3d3d;left:645.5px;-webkit-text-stroke:0.08px currentColor;">Which service requests at my site are</div>
<div class="t" style="top:85.69px;font-size:5.85px;line-height:7.02px;color:#3d3d3d;left:645.5px;-webkit-text-stroke:0.08px currentColor;">overdue?</div>
<svg class="b" style="left:750.2px;top:81.2px;" width="6.8" height="6.8" viewBox="0 0 32 32"><path d="M6 6l20 10L6 26l3-10z M9 16h9" fill="none" stroke="#787878" stroke-width="3"/></svg>
<div class="b" style="left:615.4px;top:60.1px;width:155.4px;height:16.4px;background:#fff;border-radius:3.5px 3.5px 0 0;"></div>
<div class="b" style="left:615.4px;top:76.5px;width:155.4px;height:0.5px;background:#dcdcdc;"></div>
<div class="b" style="left:724.8px;top:63.5px;width:10px;height:10px;background:#fff;border:0.7px solid #525252;box-sizing:border-box;border-radius:0.5px;"></div>
<div class="t" style="top:65.7px;font-size:5px;line-height:6px;color:#262626;left:727px;font-weight:700;-webkit-text-stroke:0.08px currentColor;">AI</div>
<svg class="b" style="left:742px;top:64.6px;" width="8.2" height="8.2" viewBox="0 0 32 32"><path d="M25 16a9 9 0 1 1-3-6.7M23 4v6h-6" fill="none" stroke="#525252" stroke-width="2.6"/></svg>
<div class="b" style="left:760.5px;top:68.3px;width:4.6px;height:0.6px;background:#6f6f6f;"></div>
<div class="t" style="top:111.59px;font-size:4.85px;line-height:5.82px;color:#7a7a7a;right:10px;-webkit-text-stroke:0.08px currentColor;">You 3:36 PM</div>
<div class="b" style="left:639px;top:121.2px;width:125px;height:21.5px;background:#e0e0e0;border-radius:3px;"></div>
<div class="t" style="top:124.99px;font-size:5.85px;line-height:7.02px;color:#4a4a4a;left:644.2px;-webkit-text-stroke:0.08px currentColor;">show open work orders at bedford with leak</div>
<div class="t" style="top:132.59px;font-size:5.85px;line-height:7.02px;color:#4a4a4a;left:644.2px;-webkit-text-stroke:0.08px currentColor;">in description</div>
<svg class="b" style="left:623.2px;top:155.4px;" width="11.2" height="11.2" viewBox="0 0 32 32"><defs><linearGradient id="g160" x1="0" y1="0" x2="1" y2="1"><stop offset="0" stop-color="#8a3ffc"/><stop offset="1" stop-color="#0f62fe"/></linearGradient></defs><circle cx="16" cy="16" r="13" fill="none" stroke="url(#g160)" stroke-width="2.6" stroke-dasharray="22 4 30 5"/><circle cx="20" cy="12" r="5.5" fill="none" stroke="#3d4fe0" stroke-width="2"/><circle cx="13.5" cy="22.5" r="3.6" fill="#fff" stroke="#1c1f6b" stroke-width="2.4"/><circle cx="8" cy="9.5" r="1.7" fill="#1c1f6b"/><circle cx="25.5" cy="23" r="1.7" fill="#1c1f6b"/><path d="M9 17c3-5 7-7 11-6" fill="none" stroke="#4a5cf0" stroke-width="1.8"/></svg>
<div class="t" style="top:158.53px;font-size:4.95px;line-height:5.94px;color:#868686;left:639px;-webkit-text-stroke:0.08px currentColor;">watsonx 3:36 PM</div>
<div class="t" style="top:169.58px;font-size:5.7px;line-height:6.84px;color:#161616;left:639px;font-weight:700;-webkit-text-stroke:0.08px currentColor;">Your request</div>
<div class="t" style="top:180.59px;font-size:5.85px;line-height:7.02px;color:#2e2e2e;left:639px;-webkit-text-stroke:0.08px currentColor;">I want to show open work orders at the Bedford</div>
<div class="t" style="top:187.99px;font-size:5.85px;line-height:7.02px;color:#2e2e2e;left:639px;-webkit-text-stroke:0.08px currentColor;">site with 'leak' in the description</div>
<div class="b" style="left:632.3px;top:197.3px;width:131.7px;height:85.35000000000001px;background:#fff;"></div>
<div class="t" style="top:205.08px;font-size:5.7px;line-height:6.84px;color:#161616;left:639px;font-weight:700;-webkit-text-stroke:0.08px currentColor;">Results: 19</div>
<svg class="b" style="left:731.2px;top:204.3px;" width="7.3" height="7.3" viewBox="0 0 32 32"><path d="M16 4v16M9 14l7 7 7-7M6 26h20" fill="none" stroke="#393939" stroke-width="2.6"/></svg>
<svg class="b" style="left:750.5px;top:204.3px;" width="7.3" height="7.3" viewBox="0 0 32 32"><path d="M18 5h9v9M27 5L17 15M14 27H5v-9M5 27l10-10" fill="none" stroke="#161616" stroke-width="2.8"/></svg>
<div class="b" style="left:632.3px;top:217.8px;width:131.7px;height:9.2px;background:#e0e0e0;"></div>
<div class="t" style="top:219.08px;font-size:5.7px;line-height:6.84px;color:#161616;left:639px;font-weight:700;-webkit-text-stroke:0.08px currentColor;">Work Order</div>
<div class="t" style="top:219.08px;font-size:5.7px;line-height:6.84px;color:#161616;left:691px;font-weight:700;-webkit-text-stroke:0.08px currentColor;">Status</div>
<div class="t" style="top:219.08px;font-size:5.7px;line-height:6.84px;color:#161616;left:729.3px;font-weight:700;-webkit-text-stroke:0.08px currentColor;">Description</div>
<div class="t" style="top:229.54px;font-size:5.85px;line-height:7.02px;color:#0f62fe;left:639px;-webkit-text-stroke:0.08px currentColor;">5005</div>
<div class="t" style="top:229.54px;font-size:5.85px;line-height:7.02px;color:#525252;left:691px;-webkit-text-stroke:0.08px currentColor;transform:scaleX(0.9);transform-origin:0 50%;">WAPPR</div>
<div class="t" style="top:229.54px;font-size:5.85px;line-height:7.02px;color:#525252;left:729.3px;-webkit-text-stroke:0.08px currentColor;width:34.5px;overflow:hidden;">Check-out L...</div>
<div class="b" style="left:632.3px;top:237.75px;width:131.7px;height:0.4px;background:#ececec;"></div>
<div class="t" style="top:239.29px;font-size:5.85px;line-height:7.02px;color:#0f62fe;left:639px;-webkit-text-stroke:0.08px currentColor;">6005</div>
<div class="t" style="top:239.29px;font-size:5.85px;line-height:7.02px;color:#525252;left:691px;-webkit-text-stroke:0.08px currentColor;transform:scaleX(0.9);transform-origin:0 50%;">WAPPR</div>
<div class="t" style="top:239.29px;font-size:5.85px;line-height:7.02px;color:#525252;left:729.3px;-webkit-text-stroke:0.08px currentColor;width:34.5px;overflow:hidden;">Check-out L...</div>
<div class="b" style="left:632.3px;top:247.5px;width:131.7px;height:0.4px;background:#ececec;"></div>
<div class="t" style="top:249.04px;font-size:5.85px;line-height:7.02px;color:#0f62fe;left:639px;-webkit-text-stroke:0.08px currentColor;">T1065</div>
<div class="t" style="top:249.04px;font-size:5.85px;line-height:7.02px;color:#525252;left:691px;-webkit-text-stroke:0.08px currentColor;transform:scaleX(0.9);transform-origin:0 50%;">APPR</div>
<div class="t" style="top:249.04px;font-size:5.85px;line-height:7.02px;color:#525252;left:729.3px;-webkit-text-stroke:0.08px currentColor;width:34.5px;overflow:hidden;">Check housi...</div>
<div class="b" style="left:632.3px;top:257.25px;width:131.7px;height:0.4px;background:#ececec;"></div>
<div class="t" style="top:258.79px;font-size:5.85px;line-height:7.02px;color:#0f62fe;left:639px;-webkit-text-stroke:0.08px currentColor;">1217</div>
<div class="t" style="top:258.79px;font-size:5.85px;line-height:7.02px;color:#525252;left:691px;-webkit-text-stroke:0.08px currentColor;transform:scaleX(0.9);transform-origin:0 50%;">WAPPR</div>
<div class="t" style="top:258.79px;font-size:5.85px;line-height:7.02px;color:#525252;left:729.3px;-webkit-text-stroke:0.08px currentColor;width:34.5px;overflow:hidden;">Decreased fl...</div>
<div class="b" style="left:632.3px;top:267px;width:131.7px;height:0.4px;background:#ececec;"></div>
<div class="t" style="top:268.54px;font-size:5.85px;line-height:7.02px;color:#0f62fe;left:639px;-webkit-text-stroke:0.08px currentColor;">T1076</div>
<div class="t" style="top:268.54px;font-size:5.85px;line-height:7.02px;color:#525252;left:691px;-webkit-text-stroke:0.08px currentColor;transform:scaleX(0.9);transform-origin:0 50%;">WAPPR</div>
<div class="t" style="top:268.54px;font-size:5.85px;line-height:7.02px;color:#525252;left:729.3px;-webkit-text-stroke:0.08px currentColor;width:34.5px;overflow:hidden;">Check seal a...</div>
<div class="b" style="left:632.3px;top:276.55px;width:131.7px;height:5.8px;background:#ededed;border-radius:2.9px;"></div>
<div class="b" style="left:632.3px;top:276.55px;width:27px;height:5.8px;background:#8d8d8d;border-radius:2.9px;"></div>
<div class="t" style="top:298.39px;font-size:4.85px;line-height:5.82px;color:#7a7a7a;right:10px;-webkit-text-stroke:0.08px currentColor;">You 3:38 PM</div>
<div class="b" style="left:669.5px;top:308px;width:94.5px;height:14.2px;background:#e0e0e0;border-radius:3px;"></div>
<div class="t" style="top:311.79px;font-size:5.85px;line-height:7.02px;color:#4a4a4a;left:674.7px;-webkit-text-stroke:0.08px currentColor;">show open work for owner miller</div>
<svg class="b" style="left:623.2px;top:335.4px;" width="11.2" height="11.2" viewBox="0 0 32 32"><defs><linearGradient id="g340" x1="0" y1="0" x2="1" y2="1"><stop offset="0" stop-color="#8a3ffc"/><stop offset="1" stop-color="#0f62fe"/></linearGradient></defs><circle cx="16" cy="16" r="13" fill="none" stroke="url(#g340)" stroke-width="2.6" stroke-dasharray="22 4 30 5"/><circle cx="20" cy="12" r="5.5" fill="none" stroke="#3d4fe0" stroke-width="2"/><circle cx="13.5" cy="22.5" r="3.6" fill="#fff" stroke="#1c1f6b" stroke-width="2.4"/><circle cx="8" cy="9.5" r="1.7" fill="#1c1f6b"/><circle cx="25.5" cy="23" r="1.7" fill="#1c1f6b"/><path d="M9 17c3-5 7-7 11-6" fill="none" stroke="#4a5cf0" stroke-width="1.8"/></svg>
<div class="t" style="top:338.33px;font-size:4.95px;line-height:5.94px;color:#868686;left:639px;-webkit-text-stroke:0.08px currentColor;">watsonx 3:38 PM</div>
<div class="t" style="top:349.18px;font-size:5.7px;line-height:6.84px;color:#161616;left:639px;font-weight:700;-webkit-text-stroke:0.08px currentColor;">Your request</div>
<div class="t" style="top:360.09px;font-size:5.85px;line-height:7.02px;color:#2e2e2e;left:639px;-webkit-text-stroke:0.08px currentColor;">I am looking for open work orders assigned to</div>
<div class="t" style="top:367.49px;font-size:5.85px;line-height:7.02px;color:#2e2e2e;left:639px;-webkit-text-stroke:0.08px currentColor;">owner miller</div>
<div class="b" style="left:632.3px;top:376.8px;width:131.7px;height:46.35px;background:#fff;"></div>
<div class="t" style="top:384.58px;font-size:5.7px;line-height:6.84px;color:#161616;left:639px;font-weight:700;-webkit-text-stroke:0.08px currentColor;">Results: 1</div>
<svg class="b" style="left:731.2px;top:383.8px;" width="7.3" height="7.3" viewBox="0 0 32 32"><path d="M16 4v16M9 14l7 7 7-7M6 26h20" fill="none" stroke="#393939" stroke-width="2.6"/></svg>
<svg class="b" style="left:750.5px;top:383.8px;" width="7.3" height="7.3" viewBox="0 0 32 32"><path d="M18 5h9v9M27 5L17 15M14 27H5v-9M5 27l10-10" fill="none" stroke="#161616" stroke-width="2.8"/></svg>
<div class="b" style="left:632.3px;top:397.3px;width:131.7px;height:9.2px;background:#e0e0e0;"></div>
<div class="t" style="top:398.58px;font-size:5.7px;line-height:6.84px;color:#161616;left:639px;font-weight:700;-webkit-text-stroke:0.08px currentColor;">Work Order</div>
<div class="t" style="top:398.58px;font-size:5.7px;line-height:6.84px;color:#161616;left:691px;font-weight:700;-webkit-text-stroke:0.08px currentColor;">Status</div>
<div class="t" style="top:398.58px;font-size:5.7px;line-height:6.84px;color:#161616;left:729.3px;font-weight:700;-webkit-text-stroke:0.08px currentColor;">Description</div>
<div class="t" style="top:409.04px;font-size:5.85px;line-height:7.02px;color:#0f62fe;left:639px;-webkit-text-stroke:0.08px currentColor;">1217</div>
<div class="t" style="top:409.04px;font-size:5.85px;line-height:7.02px;color:#525252;left:691px;-webkit-text-stroke:0.08px currentColor;transform:scaleX(0.9);transform-origin:0 50%;">WAPPR</div>
<div class="t" style="top:409.04px;font-size:5.85px;line-height:7.02px;color:#525252;left:729.3px;-webkit-text-stroke:0.08px currentColor;width:34.5px;overflow:hidden;">Decreased fl...</div>
<div class="b" style="left:632.3px;top:417.05px;width:131.7px;height:5.8px;background:#ededed;border-radius:2.9px;"></div>
<div class="b" style="left:632.3px;top:417.05px;width:27px;height:5.8px;background:#8d8d8d;border-radius:2.9px;"></div>
<div class="b" style="left:615.4px;top:436.8px;width:155.4px;height:22.4px;background:#fff;border-radius:0 0 3.5px 3.5px;"></div>
<div class="b" style="left:615.4px;top:436.6px;width:155.4px;height:0.5px;background:#dcdcdc;"></div>
<div class="t" style="top:444.94px;font-size:5.6px;line-height:6.72px;color:#a8a8a8;left:623px;-webkit-text-stroke:0.08px currentColor;">Type something...</div>
<svg class="b" style="left:756.5px;top:445px;" width="6.5" height="6.5" viewBox="0 0 32 32"><path d="M6 6l20 10L6 26l3-10z M9 16h9" fill="none" stroke="#c6c6c6" stroke-width="2.6"/></svg>
</div></div>
</body>
</html>
